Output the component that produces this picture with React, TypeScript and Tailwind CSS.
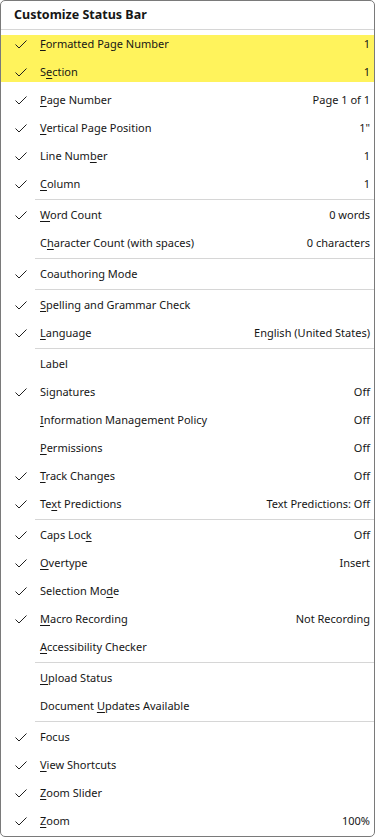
import React from "react";

type Item = {
  label: string;
  key?: number; // index of underlined access key
  value?: string;
  checked?: boolean;
};

type Group = Item[];

const groups: Group[] = [
  [
    { label: "Page Number", key: 0, value: "Page 1 of 1", checked: true },
    { label: "Vertical Page Position", key: 0, value: "1\"", checked: true },
    { label: "Line Number", key: 8, value: "1", checked: true },
    { label: "Column", key: 0, value: "1", checked: true },
  ],
  [
    { label: "Word Count", key: 0, value: "0 words", checked: true },
    { label: "Character Count (with spaces)", key: 1, value: "0 characters" },
  ],
  [{ label: "Coauthoring Mode", checked: true }],
  [
    { label: "Spelling and Grammar Check", key: 0, checked: true },
    { label: "Language", key: 0, value: "English (United States)", checked: true },
  ],
  [
    { label: "Label" },
    { label: "Signatures", value: "Off", checked: true },
    { label: "Information Management Policy", key: 0, value: "Off" },
    { label: "Permissions", key: 0, value: "Off" },
    { label: "Track Changes", key: 0, value: "Off", checked: true },
    { label: "Text Predictions", key: 2, value: "Text Predictions: Off", checked: true },
  ],
  [
    { label: "Caps Lock", key: 8, value: "Off", checked: true },
    { label: "Overtype", key: 0, value: "Insert", checked: true },
    { label: "Selection Mode", key: 12, checked: true },
    { label: "Macro Recording", key: 0, value: "Not Recording", checked: true },
    { label: "Accessibility Checker", key: 0 },
  ],
  [
    { label: "Upload Status", key: 0 },
    { label: "Document Updates Available", key: 9 },
  ],
  [
    { label: "Focus", checked: true },
    { label: "View Shortcuts", key: 0, checked: true },
    { label: "Zoom Slider", key: 0, checked: true },
    { label: "Zoom", key: 0, value: "100%", checked: true },
  ],
];

function Check() {
  return (
    <svg width="14" height="14" viewBox="0 0 14 14" fill="none">
      <path d="M1.5 7.5 L5 11 L12.5 3.5" stroke="#1f1f1f" strokeWidth="1" />
    </svg>
  );
}

function Label({ text, k }: { text: string; k?: number }) {
  if (k === undefined) return <span>{text}</span>;
  return (
    <span>
      {text.slice(0, k)}
      <span className="underline underline-offset-2">{text[k]}</span>
      {text.slice(k + 1)}
    </span>
  );
}

function Row({ item }: { item: Item }) {
  return (
    <div className="flex h-[28px] shrink-0 items-center pr-[4px]">
      <div className="flex w-[39px] shrink-0 items-center justify-start pl-[13px]">
        {item.checked && <Check />}
      </div>
      <div className="flex-1 whitespace-nowrap">
        <Label text={item.label} k={item.key} />
      </div>
      {item.value && <div className="whitespace-nowrap">{item.value}</div>}
    </div>
  );
}

function Separator() {
  return <div className="my-[1px] ml-[34px] h-px bg-[#d6d6d6]" />;
}

export default function App() {
  return (
    <div className="h-[837px] w-[375px] bg-white">
      <div
        className="h-[837px] overflow-hidden rounded-[5px] border border-[#7a7a7a] bg-white text-[11px] text-[#161616]"
        style={{ fontFamily: '"Noto Sans", "Open Sans", sans-serif' }}
      >
        <div className="flex h-[28px] items-center pl-[13px] text-[12.5px] font-bold">
          Customize Status Bar
        </div>
        <div className="h-px bg-[#d6d6d6]" />
        <div className="mt-[5px] mb-[4px] flex h-[47px] flex-col bg-[#fff35c]">
          <div className="-mt-[5px] flex flex-col">
            <Row item={{ label: "Formatted Page Number", key: 0, value: "1", checked: true }} />
            <Row item={{ label: "Section", key: 1, value: "1", checked: true }} />
          </div>
        </div>
        {groups.map((g, gi) => (
          <div key={gi}>
            {gi > 0 && <Separator />}
            {g.map((it) => (
              <Row key={it.label} item={it} />
            ))}
          </div>
        ))}
      </div>
    </div>
  );
}
